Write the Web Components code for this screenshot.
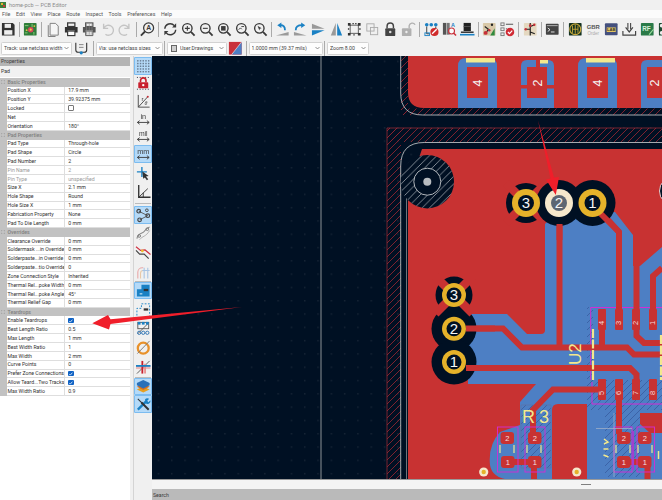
<!DOCTYPE html>
<html>
<head>
<meta charset="utf-8">
<title>home-pcb — PCB Editor</title>
<style>
  html, body { margin: 0; padding: 0; background: #f0f0f0; overflow: hidden; }
  body { font-family: Roboto, "Liberation Sans", sans-serif; }
  #app { display: flex; flex-direction: column; width: 662px; height: 500px; position: relative; overflow: hidden; filter: blur(0.3px); }
  #main { display: flex; height: 444px; }
  #right { display: flex; flex-direction: column; flex: none; width: 510px; }
</style>
</head>
<body>
<div id="app">
  <pcb-titlebar>home-pcb — PCB Editor</pcb-titlebar>
  <pcb-menubar>
    <span>File</span><span>Edit</span><span>View</span><span>Place</span><span>Route</span><span>Inspect</span><span>Tools</span><span>Preferences</span><span>Help</span>
  </pcb-menubar>
  <pcb-toolbar>
    <pcb-icon name="save"></pcb-icon><pcb-sep></pcb-sep>
    <pcb-icon name="board"></pcb-icon><pcb-sep></pcb-sep>
    <pcb-icon name="page"></pcb-icon><pcb-icon name="print"></pcb-icon><pcb-icon name="plot"></pcb-icon><pcb-icon name="undo"></pcb-icon><pcb-icon name="redo"></pcb-icon><pcb-sep></pcb-sep>
    <pcb-icon name="find"></pcb-icon><pcb-sep></pcb-sep>
    <pcb-icon name="refresh"></pcb-icon><pcb-icon name="zoomin"></pcb-icon><pcb-icon name="zoomout"></pcb-icon><pcb-icon name="zoomfit"></pcb-icon><pcb-icon name="zoomback"></pcb-icon><pcb-icon name="zoomsel"></pcb-icon><pcb-sep></pcb-sep>
    <pcb-icon name="rotl"></pcb-icon><pcb-icon name="rotr"></pcb-icon><pcb-icon name="mirrorh"></pcb-icon><pcb-icon name="mirrorv"></pcb-icon>
    <pcb-icon name="group"></pcb-icon><pcb-icon name="ungroup"></pcb-icon><pcb-icon name="lock"></pcb-icon><pcb-icon name="unlock"></pcb-icon><pcb-sep></pcb-sep>
    <pcb-icon name="netcheck"></pcb-icon><pcb-icon name="netinspect"></pcb-icon><pcb-icon name="layerhat"></pcb-icon><pcb-sep></pcb-sep>
    <pcb-icon name="router"></pcb-icon><pcb-icon name="drc"></pcb-icon><pcb-sep></pcb-sep>
    <pcb-icon name="schem"></pcb-icon><pcb-sep></pcb-sep>
    <pcb-icon name="terminal"></pcb-icon><pcb-sep></pcb-sep>
    <pcb-icon name="fpcheck"></pcb-icon><pcb-icon name="gbr"></pcb-icon><pcb-icon name="fab"></pcb-icon><pcb-icon name="import"></pcb-icon><pcb-icon name="rfpcb"></pcb-icon><pcb-icon name="pads"></pcb-icon>
  </pcb-toolbar>
  <pcb-options>
    <pcb-select width="71">Track: use netclass width</pcb-select>
    <pcb-icon name="autotrack" style="width:19px"></pcb-icon><pcb-sep></pcb-sep>
    <pcb-select width="67">Via: use netclass sizes</pcb-select><pcb-sep></pcb-sep>
    <pcb-select width="60" swatch>User.Drawings</pcb-select>
    <pcb-icon name="layerpair" style="width:17px"></pcb-icon><pcb-sep></pcb-sep>
    <pcb-select width="74">1.0000 mm (39.37 mils)</pcb-select><pcb-sep></pcb-sep>
    <pcb-select width="42">Zoom 8.00</pcb-select>
  </pcb-options>
  <div id="main">
    <prop-panel title-text="Properties" kind="Pad">
      <prop-group label="Basic Properties">
        <prop-row name="Position X" value="17.9 mm"></prop-row>
        <prop-row name="Position Y" value="39.92375 mm"></prop-row>
        <prop-row name="Locked" check="off"></prop-row>
        <prop-row name="Net" value=""></prop-row>
        <prop-row name="Orientation" value="180°"></prop-row>
      </prop-group>
      <prop-group label="Pad Properties">
        <prop-row name="Pad Type" value="Through-hole"></prop-row>
        <prop-row name="Pad Shape" value="Circle"></prop-row>
        <prop-row name="Pad Number" value="2"></prop-row>
        <prop-row name="Pin Name" value="2" disabled></prop-row>
        <prop-row name="Pin Type" value="unspecified" disabled></prop-row>
        <prop-row name="Size X" value="2.1 mm"></prop-row>
        <prop-row name="Hole Shape" value="Round"></prop-row>
        <prop-row name="Hole Size X" value="1 mm"></prop-row>
        <prop-row name="Fabrication Property" value="None"></prop-row>
        <prop-row name="Pad To Die Length" value="0 mm"></prop-row>
      </prop-group>
      <prop-group label="Overrides">
        <prop-row name="Clearance Override" value="0 mm"></prop-row>
        <prop-row name="Soldermask ...in Override" value="0 mm"></prop-row>
        <prop-row name="Solderpaste...in Override" value="0 mm"></prop-row>
        <prop-row name="Solderpaste...tio Override" value="0"></prop-row>
        <prop-row name="Zone Connection Style" value="Inherited"></prop-row>
        <prop-row name="Thermal Rel...poke Width" value="0 mm"></prop-row>
        <prop-row name="Thermal Rel...poke Angle" value="45°"></prop-row>
        <prop-row name="Thermal Relief Gap" value="0 mm"></prop-row>
      </prop-group>
      <prop-group label="Teardrops">
        <prop-row name="Enable Teardrops" check="on"></prop-row>
        <prop-row name="Best Length Ratio" value="0.5"></prop-row>
        <prop-row name="Max Length" value="1 mm"></prop-row>
        <prop-row name="Best Width Ratio" value="1"></prop-row>
        <prop-row name="Max Width" value="2 mm"></prop-row>
        <prop-row name="Curve Points" value="0"></prop-row>
        <prop-row name="Prefer Zone Connections" check="on"></prop-row>
        <prop-row name="Allow Teard...Two Tracks" check="on"></prop-row>
        <prop-row name="Max Width Ratio" value="0.9"></prop-row>
      </prop-group>
    </prop-panel>
    <side-toolbar>
      <pcb-icon name="grid" active></pcb-icon>
      <pcb-icon name="gridlock"></pcb-icon>
      <pcb-icon name="polar"></pcb-icon>
      <pcb-icon name="unitin"></pcb-icon>
      <pcb-icon name="unitmil"></pcb-icon>
      <pcb-icon name="unitmm" active></pcb-icon>
      <pcb-icon name="cursor" tall></pcb-icon>
      <pcb-icon name="axes" tall></pcb-icon>
      <pcb-sep horizontal style="margin:1.5px auto"></pcb-sep>
      <pcb-icon name="ratsnest" active></pcb-icon>
      <pcb-icon name="curved" tall></pcb-icon>
      <pcb-icon name="shove" tall></pcb-icon>
      <pcb-icon name="fade" tall></pcb-icon>
      <pcb-sep horizontal style="margin:-.5px auto"></pcb-sep>
      <pcb-icon name="zonefill" active></pcb-icon>
      <pcb-icon name="zoneout" tall></pcb-icon>
      <pcb-icon name="padsketch" tall></pcb-icon>
      <pcb-icon name="viasketch" tall></pcb-icon>
      <pcb-icon name="trackclear" tall></pcb-icon>
      <pcb-sep horizontal style="margin:0 auto"></pcb-sep>
      <pcb-icon name="layers" active></pcb-icon>
      <pcb-icon name="tools" active></pcb-icon>
    </side-toolbar>
    <div id="right">
      <pcb-canvas></pcb-canvas>
      <pcb-search>Search</pcb-search>
    </div>
  </div>
  <pcb-arrows></pcb-arrows>
</div>

<script>
const UI_FONT = 'Roboto, "Liberation Sans", sans-serif';
const D = "#3a3a3a";
const B = "#1a81c4";

function glass(inner) {
  return `<circle cx="7" cy="7" r="5.2" fill="none" stroke="${D}" stroke-width="1.5"/><path d="M11 11l4 4" stroke="${D}" stroke-width="2"/>${inner}`;
}
function unit(txt, size) {
  return `<text x="8" y="8" text-anchor="middle" font-size="${size}" fill="${D}" font-family="Liberation Sans">${txt}</text><path d="M1.5 11.5h13M1.5 11.5l2.5-2M1.5 11.5l2.5 2M14.5 11.5l-2.5-2M14.5 11.5l-2.5 2" stroke="${D}" fill="none"/>`;
}

// icon table, everything drawn on a 16x16 box
const ICONS = {
  save: `<path d="M1 1h12l2 2v12H1z" fill="#333"/><rect x="4" y="2" width="7" height="4.5" fill="#eee"/><rect x="3.5" y="9" width="9" height="5" fill="#eee"/>`,
  board: `<rect x="1" y="1" width="14" height="14" rx="1" fill="#2f7d3a"/><path d="M2 4h4M10 2v4M2 12h3M12 14v-3" stroke="#8fd07a"/><circle cx="8.5" cy="8.5" r="3" fill="#d8445a"/><circle cx="8.5" cy="8.5" r="1.2" fill="#f4d04a"/><circle cx="4" cy="9" r="1" fill="#e8c040"/><circle cx="12.5" cy="4.5" r="1" fill="#e8c040"/>`,
  page: `<path d="M4.5 1.5h6l3 3v10h-9z" fill="#f6f6f6" stroke="#777"/><path d="M2.5 3.5v12.5h8" fill="none" stroke="#777"/>`,
  print: `<rect x="4" y="1" width="8" height="4" fill="none" stroke="${D}" stroke-width="1.4"/><path d="M1 5.5h14v6h-3v-2H4v2H1z" fill="#333"/><rect x="4" y="10" width="8" height="5" fill="#fff" stroke="${D}" stroke-width="1.3"/>`,
  plot: `<rect x="4" y="1" width="8" height="4" fill="none" stroke="#555" stroke-width="1.3"/><path d="M1 5.5h14v6h-3v-2H4v2H1z" fill="#555"/><path d="M4 10h8v5H4z" fill="#ddd" stroke="#555"/><path d="M5 2v12M8 2v12M11 2v12" stroke="#888" stroke-width=".6"/>`,
  undo: `<path d="M4 2v5h5M4.5 6.5a5.5 5.5 0 1 1 1.5 7" fill="none" stroke="#c4c4c4" stroke-width="1.5"/>`,
  redo: `<path d="M12 2v5H7M11.5 6.5a5.5 5.5 0 1 0-1.5 7" fill="none" stroke="#c4c4c4" stroke-width="1.5"/>`,
  find: `<circle cx="9.5" cy="6.5" r="5.5" fill="none" stroke="${D}" stroke-width="1.4"/><path d="M5.5 10.5L1 15" stroke="${D}" stroke-width="2"/><text x="9.5" y="9" text-anchor="middle" font-size="7.5" font-weight="700" fill="${D}" font-family="Liberation Sans">A</text>`,
  refresh: `<path d="M2 7.5a6 6 0 0 1 10.5-3.5M14 8.5A6 6 0 0 1 3.5 12" fill="none" stroke="${D}" stroke-width="1.6"/><path d="M14.5 1.5v4.5h-4.5zM1.5 14.5V10H6z" fill="${D}"/>`,
  zoomin: glass(`<path d="M4.3 7h5.4M7 4.3v5.4" stroke="${D}" stroke-width="1.2"/>`),
  zoomout: glass(`<path d="M4.3 7h5.4" stroke="${D}" stroke-width="1.2"/>`),
  zoomfit: glass(`<rect x="4.5" y="4.5" width="5" height="5" fill="${D}"/>`),
  zoomback: glass(`<path d="M4 8.5l2-2 1.5 1.5M7 5h3" fill="none" stroke="${D}"/>`),
  zoomsel: glass(`<path d="M5 4l4.5 3-2 .5-.5 2z" fill="${D}"/>`),
  rotl: `<path d="M1 15l14-4v4z" fill="#9a9a9a"/><path d="M11 9C11 5.5 9 3.5 6 3.5" fill="none" stroke="${B}" stroke-width="2"/><path d="M7 .5v6L2.5 3.5z" fill="${B}"/>`,
  rotr: `<path d="M15 15L1 11v4z" fill="#9a9a9a"/><path d="M3 9c0-3.5 2-5.5 7-5.5" fill="none" stroke="${B}" stroke-width="2"/><path d="M9 .5v6l4.5-3z" fill="${B}"/>`,
  mirrorh: `<path d="M1 2l14 5.5H1z" fill="#999"/><path d="M1 9h14L1 15z" fill="${B}"/>`,
  mirrorv: `<path d="M2 15L7.5 1v14z" fill="#999"/><path d="M9 1l5.5 14H9z" fill="${B}"/>`,
  group: `<rect x="3.5" y="3.5" width="9" height="9" fill="none" stroke="#555"/><path d="M1 1h3v3H1zM12 1h3v3h-3zM1 12h3v3H1zM12 12h3v3h-3zM6 1h1.5v1.5H6zM9 1h1.5v1.5H9zM1 7h1.5v1.5H1zM13.5 7H15v1.5h-1.5zM7 13.5h1.5V15H7z" fill="#333"/>`,
  ungroup: `<rect x="2" y="2" width="8" height="8" fill="none" stroke="#aaa"/><rect x="6" y="6" width="8" height="8" fill="none" stroke="#aaa"/>`,
  lock: `<path d="M4.5 7V4.5a3.5 3.5 0 0 1 7 0V7" fill="none" stroke="#444" stroke-width="1.6"/><rect x="2.5" y="7" width="11" height="8.5" rx="1" fill="#444"/><circle cx="8" cy="11" r="1.4" fill="#ddd"/>`,
  unlock: `<path d="M9 7V4a3.5 3.5 0 0 1 6.5-1" fill="none" stroke="#b0b0b0" stroke-width="1.5"/><rect x="1" y="7" width="10.5" height="8.5" rx="1" fill="#b0b0b0"/><circle cx="6" cy="11" r="1.3" fill="#eee"/>`,
  netcheck: `<circle cx="3" cy="3" r="2" fill="${B}"/><circle cx="8" cy="3" r="2" fill="${B}"/><circle cx="13" cy="3" r="2" fill="${B}"/><path d="M3 5v8h3M13 5v3" fill="none" stroke="#333"/><rect x="1" y="12" width="5" height="3" fill="none" stroke="${B}"/><circle cx="11.5" cy="11" r="4.5" fill="#d02b2b"/><path d="M9 13l5-5" stroke="#fff" stroke-width="1.5"/>`,
  netinspect: `<rect x="1" y="1" width="3.5" height="13" fill="#555"/><rect x="5" y="1" width="3.5" height="13" fill="#777"/><text x="12" y="6" text-anchor="middle" font-size="6" font-weight="700" fill="${B}" font-family="Liberation Sans">A</text><circle cx="10.5" cy="10" r="3.3" fill="#fff" fill-opacity=".6" stroke="#c8303a" stroke-width="1.2"/><path d="M13 12.5l2.5 2.5" stroke="#c8303a" stroke-width="1.6"/>`,
  layerhat: `<path d="M4 1h8v9H4z" fill="#222"/><path d="M4 5h8" stroke="#555"/><path d="M1 10.5h14v1.5H1z" fill="#222"/><path d="M0 14h16" stroke="${B}" stroke-width="1.8"/>`,
  router: `<rect x="1" y="1" width="14" height="14" rx="1" fill="#d8c8a8"/><path d="M9 15l5-8v8z" fill="#2f8a3e"/><path d="M3 5l4 3-3 5" fill="none" stroke="#222" stroke-width="1.2"/><circle cx="4" cy="12" r="2.2" fill="#c8303a"/><circle cx="8" cy="9" r="1.4" fill="#c8303a"/><circle cx="11" cy="3" r="1.3" fill="#222"/>`,
  drc: `<rect x="1" y="1" width="3.5" height="3" fill="none" stroke="#777"/><rect x="1" y="6.5" width="3.5" height="3" fill="none" stroke="#777"/><rect x="1" y="12" width="3.5" height="3" fill="none" stroke="#777"/><path d="M6.5 2.5h8M6.5 7.5h1" stroke="#555" stroke-width="1.2"/><circle cx="11" cy="11" r="4.7" fill="#d02b35"/><path d="M8.7 11l1.8 1.8 3-3.3" fill="none" stroke="#fff" stroke-width="1.3"/>`,
  schem: `<rect x="1" y="1" width="14" height="14" rx="1" fill="#e4d8c0"/><path d="M8 1v14M2 8h6M8 5l5-2M8 11l5 2" stroke="#222" stroke-width="1.3"/><circle cx="8" cy="4" r="1.5" fill="#c8303a"/><circle cx="12.5" cy="3" r="1.3" fill="#c8303a"/><circle cx="3" cy="8" r="1.3" fill="#c8303a"/>`,
  terminal: `<rect x="1" y="2" width="14" height="12" rx=".8" fill="#444"/><path d="M2 4h12" stroke="#bbb"/><path d="M3 6.5l2.5 2L3 10.5M6.5 11h4" fill="none" stroke="#eee"/>`,
  fpcheck: `<rect x="1" y="1" width="14" height="14" rx="1" fill="#123020"/><ellipse cx="8" cy="8" rx="6" ry="6" fill="none" stroke="#c8a83c" stroke-width="1.3"/><path d="M5 4v8M8 3v10M11 4v8M5 8h6" stroke="#c8a83c"/>`,
  gbr: `<text x="8" y="7.3" text-anchor="middle" font-size="6.5" font-weight="700" fill="#555" font-family="Liberation Sans">GBR</text><text x="8" y="14" text-anchor="middle" font-size="5" fill="#aaa" font-family="Liberation Sans">Order</text>`,
  fab: `<rect x="1" y="1.5" width="14" height="13" rx="1" fill="#44507e"/><rect x="3" y="6" width="10" height="5" fill="#e8c860"/><text x="8" y="10.3" text-anchor="middle" font-size="4.5" font-weight="700" fill="#333" font-family="Liberation Sans">LAB</text>`,
  import: `<path d="M6.5 1v7M9.5 1v7" stroke="#444" stroke-width="1.2"/><path d="M4 6l4 5 4-5" fill="none" stroke="#444" stroke-width="1.3"/><path d="M1 10v4.5h14V10" fill="none" stroke="#444" stroke-width="1.3"/>`,
  rfpcb: `<rect x="1" y="1" width="14" height="14" rx="1" fill="#2a7a48"/><text x="7" y="10" text-anchor="middle" font-size="7" font-weight="700" fill="#d8f0d8" font-family="Liberation Sans">RF</text><path d="M10 14l5-6" stroke="#9fe0a0" stroke-width="1.2"/>`,
  pads: `<rect x="1" y="1" width="14" height="14" rx="1" fill="#1c4a30"/><g fill="#eee"><circle cx="4" cy="4" r="2"/><circle cx="12" cy="4" r="2"/><circle cx="4" cy="12" r="2"/><circle cx="12" cy="12" r="2"/></g><path d="M8 5.5v5M5.5 8h5" stroke="#fff" stroke-width="1.3"/>`,
  autotrack: `<path d="M2 2v8a2.5 2.5 0 0 0 2.5 2.5h7A2.5 2.5 0 0 0 14 10V2" fill="none" stroke="#333" stroke-width="1.2"/><path d="M5.5 4h5M5.5 7h5" stroke="#888" stroke-width="1.1"/><circle cx="8" cy="13" r="1.8" fill="${B}"/>`,
  layerpair: `<rect x="1" y="1" width="14" height="14" fill="#c8303a"/><path d="M15 1v14H4z" fill="#4d7fc4"/><path d="M4 15L15 1" stroke="#eee" stroke-width=".7"/>`,
  grid: `<g fill="#6a7d92">${[2, 5, 8, 11, 14].map(y => [2, 5, 8, 11, 14].map(x => `<rect x="${x - .8}" y="${y - .8}" width="1.6" height="1.6"/>`).join("")).join("")}</g>`,
  gridlock: `<g fill="#556">${[1, 4, 7, 10, 13].map(x => `<rect x="${x}" y="1" width="1.2" height="1.2"/><rect x="${x}" y="14" width="1.2" height="1.2"/>`).join("")}</g><path d="M5 7V5a3 3 0 0 1 6 0v2" fill="none" stroke="#c8202e" stroke-width="1.8"/><rect x="2.5" y="7" width="11" height="6.5" rx=".8" fill="#c8202e"/><circle cx="8" cy="10" r="1.3" fill="#fff"/>`,
  polar: `<path d="M2.5 1v13.5H15M2.5 14.5L13 3" fill="none" stroke="#444"/><text x="6" y="7.5" font-size="6.5" font-family="Liberation Sans" fill="#333">r</text><text x="9.5" y="12.5" font-size="6.5" font-family="Liberation Serif" font-style="italic" fill="#333">θ</text><circle cx="13" cy="3" r="1.1" fill="#c8303a"/>`,
  unitin: unit("in", 8),
  unitmil: unit("mil", 7.5),
  unitmm: unit("mm", 8),
  cursor: `<path d="M1 6.5h11M6.5 1v11" stroke="${B}" stroke-width="1.5"/><path d="M7 6l7 5-3 .7 2.5 3-1.5 1-2.2-3L8 14z" fill="#333"/>`,
  axes: `<path d="M3 0v13.5h13" fill="none" stroke="#333" stroke-width="1.5"/><path d="M3 13.5L13 4M8 8.5v5" fill="none" stroke="#333"/>`,
  ratsnest: `<path d="M3 3.5l10 5L4 13" fill="none" stroke="#555"/><circle cx="3" cy="3.5" r="2" fill="none" stroke="#444" stroke-width="1.3"/><circle cx="13" cy="8.5" r="2" fill="none" stroke="#444" stroke-width="1.3"/><circle cx="4" cy="13" r="2" fill="none" stroke="#444" stroke-width="1.3"/><circle cx="12" cy="2.5" r="1.5" fill="none" stroke="#444"/>`,
  curved: `<path d="M1 14C2 7 7 9 9 6s3-4 6-5" fill="none" stroke="#888" stroke-width="1.2"/><circle cx="3.5" cy="11" r="1.5" fill="none" stroke="#777"/><circle cx="12.5" cy="3.5" r="1.5" fill="none" stroke="#777"/><path d="M4 15C7 11 11 12 15 5" fill="none" stroke="#aaa"/>`,
  shove: `<path d="M0 2l5 4 5-.5 6 5" fill="none" stroke="#d03040" stroke-width="1.3"/><path d="M0 6l4 4 5 0 5 5" fill="none" stroke="#444" stroke-width="1.3"/><circle cx="7" cy="6.5" r="1.5" fill="#f0c030"/>`,
  fade: `<path d="M2 15V8a5 5 0 0 1 5-5h1" fill="none" stroke="#e8a8a8" stroke-width="1.2"/><path d="M5 15V9a3 3 0 0 1 3-3h1" fill="none" stroke="#e8c8a8" stroke-width="1.2"/><path d="M9 15V3M13 15V3M7 6h8" stroke="#a8c4e4" stroke-width="1.2" fill="none"/>`,
  zonefill: `<path d="M1 15V7h5V2h9v13z" fill="${B}"/><rect x="8.5" y="6.5" width="5" height="2.5" fill="#333"/><path d="M4 12h3" stroke="#fff"/>`,
  zoneout: `<path d="M1 15V7h5V2h9v13" fill="none" stroke="${B}" stroke-dasharray="2 1.6"/><rect x="8.5" y="7" width="5" height="2.5" fill="#333"/>`,
  padsketch: `<path d="M2 14L14 2" stroke="#555"/><rect x="2" y="1.5" width="12" height="7" fill="none" stroke="#555"/><g fill="${B}"><rect x="2" y="1" width="3" height="3"/><rect x="6.5" y="1" width="3" height="3"/><rect x="11" y="1" width="3" height="3"/></g><g fill="none" stroke="#2a70b0"><circle cx="3.5" cy="13" r="1.8"/><circle cx="8" cy="13" r="1.8"/><circle cx="12.5" cy="13" r="1.8"/></g>`,
  viasketch: `<circle cx="8" cy="9" r="6" fill="none" stroke="#e8912a" stroke-width="2.5"/><circle cx="8" cy="9" r="2.7" fill="#f0f0f0"/><path d="M1.5 15L15 1" stroke="#777"/>`,
  trackclear: `<path d="M1 15L15 1" stroke="#555"/><path d="M0 8h16" stroke="#e8a0a0" stroke-width="4" opacity=".7"/><path d="M7 1v14" stroke="#c8202e" stroke-width="2"/><path d="M10 4v11" stroke="#e89090" stroke-width="2"/><path d="M0 6.5h16" stroke="${B}" stroke-width="2"/>`,
  layers: `<path d="M8 8l7 3.5L8 15l-7-3.5z" fill="#e8a020"/><path d="M8 5l7 3.5L8 12 1 8.5z" fill="#d87020"/><path d="M8 1l7 3.5V7L8 10.5 1 7V4.5z" fill="#2a70b8"/>`,
  tools: `<path d="M2 14L12 4" stroke="${B}" stroke-width="2.6"/><path d="M10 2.5a3.5 3.5 0 0 1 4.5-.5l-2.3 2.3 1.5 1.5L16 3.5a3.5 3.5 0 0 1-5.5 3.5z" fill="${B}"/><path d="M14 14L6 6" stroke="#333" stroke-width="2.2"/><path d="M7 7L2 2" stroke="#333" stroke-width="1.2"/>`
};

class PcbTitlebar extends HTMLElement {
  constructor() {
    super();
    this.attachShadow({ mode: "open" }).innerHTML = `
      <style>
        :host { display: flex; align-items: center; gap: 3px; height: 10px; background: #f0f0f0; color: #8c8c8c; font: 5.5px ${UI_FONT}; }
      </style>
      <svg width="6" height="6" viewBox="0 0 6 6"><rect width="6" height="6" fill="#3c7d3c"/><rect x="1" y="1" width="2" height="2" fill="#e4b030"/><rect x="3" y="3" width="2" height="2" fill="#c8303a"/></svg>
      <slot></slot>`;
  }
}
customElements.define("pcb-titlebar", PcbTitlebar);

class PcbMenubar extends HTMLElement {
  constructor() {
    super();
    this.attachShadow({ mode: "open" }).innerHTML = `
      <style>
        :host { display: flex; align-items: center; gap: 5.6px; height: 8px; padding-left: 2px; background: #fbfbfb; color: #555; font: 5.3px ${UI_FONT}; }
      </style>
      <slot></slot>`;
  }
}
customElements.define("pcb-menubar", PcbMenubar);

class PcbToolbar extends HTMLElement {
  constructor() {
    super();
    this.attachShadow({ mode: "open" }).innerHTML = `
      <style>
        :host { display: flex; align-items: center; height: 22px; margin-left: -1px; background: #f0f0f0; }
      </style>
      <slot></slot>`;
  }
}
customElements.define("pcb-toolbar", PcbToolbar);

class PcbOptions extends HTMLElement {
  constructor() {
    super();
    this.attachShadow({ mode: "open" }).innerHTML = `
      <style>
        :host { display: flex; align-items: center; height: 16px; padding-left: 1px; background: #f0f0f0; color: #444; font: 5.2px ${UI_FONT}; }
      </style>
      <slot></slot>`;
  }
}
customElements.define("pcb-options", PcbOptions);

class PcbIcon extends HTMLElement {
  connectedCallback() {
    if (this.shadowRoot) return;
    const body = ICONS[this.getAttribute("name")] || "";
    this.attachShadow({ mode: "open" }).innerHTML = `
      <style>
        :host { display: flex; align-items: center; justify-content: center; flex: none; width: 18px; height: 17.7px; box-sizing: border-box; border-radius: 1px; }
        :host([tall]) { height: 19.3px; }
        :host([active]) { background: #b5daf8; outline: 1px solid #7cbcf0; outline-offset: -1px; }
        svg { width: 14.5px; height: 14.5px; display: block; overflow: visible; }
      </style>
      <svg viewBox="0 0 16 16">${body}</svg>`;
  }
}
customElements.define("pcb-icon", PcbIcon);

class PcbSep extends HTMLElement {
  constructor() {
    super();
    this.attachShadow({ mode: "open" }).innerHTML = `
      <style>
        :host { display: block; flex: none; width: 4.5px; height: 15px; background: linear-gradient(#aaa, #aaa) center / 1px 100% no-repeat; }
        :host([horizontal]) { width: 16px; height: 1.2px; background: #bbb; }
      </style>`;
  }
}
customElements.define("pcb-sep", PcbSep);

class PcbSelect extends HTMLElement {
  connectedCallback() {
    if (this.shadowRoot) return;
    const w = this.getAttribute("width");
    const swatch = this.hasAttribute("swatch") ? `<i></i>` : "";
    this.attachShadow({ mode: "open" }).innerHTML = `
      <style>
        :host { display: flex; align-items: center; flex: none; box-sizing: border-box; width: ${w}px; height: 13px; padding: 0 2px; background: #fdfdfd; border: 1px solid #d2d2d2; border-radius: 1.5px; white-space: nowrap; overflow: hidden; }
        i { flex: none; width: 6px; height: 7px; margin: 0 3px 0 1px; background: #cfcfcf; border: .7px solid #666; box-sizing: border-box; }
        span { flex: 1; overflow: hidden; }
        svg { flex: none; width: 5px; height: 4px; }
      </style>
      ${swatch}<span><slot></slot></span>
      <svg viewBox="0 0 5 4"><path d="M.5 1l2 2 2-2" fill="none" stroke="#666" stroke-width=".7"/></svg>`;
  }
}
customElements.define("pcb-select", PcbSelect);

class PropPanel extends HTMLElement {
  connectedCallback() {
    if (this.shadowRoot) return;
    this.attachShadow({ mode: "open" }).innerHTML = `
      <style>
        :host { display: block; flex: none; width: 130px; padding-top: 1px; margin-right: 2.7px; background: #fff; color: #333; font: 5.2px ${UI_FONT}; }
        .head { height: 8.5px; line-height: 8.5px; padding-left: 1px; background: #b4b4b4; color: #3c3c3c; }
        .kind { height: 11px; line-height: 11px; padding-left: 1px; background: #f1f1f1; margin-bottom: 1.2px; }
      </style>
      <div class="head">${this.getAttribute("title-text")}</div>
      <div class="kind">${this.getAttribute("kind")}</div>
      <slot></slot>`;
  }
}
customElements.define("prop-panel", PropPanel);

class PropGroup extends HTMLElement {
  connectedCallback() {
    if (this.shadowRoot) return;
    this.attachShadow({ mode: "open" }).innerHTML = `
      <style>
        :host { display: block; }
        .label { display: flex; align-items: center; height: 8.85px; padding-left: 7.5px; background: #c2c2c2; color: #7e7e7e; font-weight: 500; position: relative; }
        .label svg { position: absolute; left: 1px; top: 2.2px; width: 4px; height: 4px; }
      </style>
      <div class="label"><svg viewBox="0 0 8 8"><rect x=".5" y=".5" width="7" height="7" fill="#e8e8e8" stroke="#999"/><path d="M2 4h4" stroke="#555"/></svg>${this.getAttribute("label")}</div>
      <slot></slot>`;
  }
}
customElements.define("prop-group", PropGroup);

class PropRow extends HTMLElement {
  connectedCallback() {
    if (this.shadowRoot) return;
    const check = this.getAttribute("check");
    let val = this.getAttribute("value") || "";
    if (check === "on") val = `<b class="on"><svg viewBox="0 0 6 6"><path d="M1.3 3.2l1.2 1.2 2.2-2.6" fill="none" stroke="#fff" stroke-width=".8"/></svg></b>`;
    if (check === "off") val = `<b class="off"></b>`;
    this.attachShadow({ mode: "open" }).innerHTML = `
      <style>
        :host { display: grid; grid-template-columns: 6.5px 58.7px 1fr; height: 8.85px; line-height: 8.5px; white-space: nowrap; }
        .gut { background: #c2c2c2; }
        .name, .val { box-sizing: border-box; border-bottom: .6px solid #dedede; overflow: hidden; padding-left: 1px; display: flex; align-items: center; }
        .name { border-right: .6px solid #dedede; letter-spacing: -.03px; }
        .val { padding-left: 3px; }
        :host([disabled]) { color: #9a9a9a; }
        b { display: block; width: 5.6px; height: 5.6px; box-sizing: border-box; border-radius: 1px; }
        .off { border: .7px solid #777; background: #fff; }
        .on { background: #0f62c4; }
        svg { display: block; width: 100%; height: 100%; }
      </style>
      <span class="gut"></span><span class="name">${this.getAttribute("name")}</span><span class="val">${val}</span>`;
  }
}
customElements.define("prop-row", PropRow);

class SideToolbar extends HTMLElement {
  constructor() {
    super();
    this.attachShadow({ mode: "open" }).innerHTML = `
      <style>
        :host { display: flex; flex-direction: column; align-items: center; flex: none; box-sizing: border-box; width: 19.3px; padding-top: 1px; background: #f0f0f0; border-left: 1px solid #d4d4d4; }
      </style>
      <slot></slot>`;
  }
}
customElements.define("side-toolbar", SideToolbar);

const HATCH = (x, y, w, h, id) => `<rect x="${x}" y="${y}" width="${w}" height="${h}" fill="url(#${id})"/>`;
const smallPad = (x, y, n) => `<rect x="${x}" y="${y}" width="13.5" height="12" rx="3" fill="#c83232"/><text x="${x + 6.75}" y="${y + 8.5}" class="n">${n}</text>`;
const sop = (x, n, top) => `<rect x="${x}" y="${top ? 309 : 379}" width="8" height="21" rx="1" fill="#c83232"/><text transform="translate(${x + 6.3} ${top ? 323 : 393}) rotate(-90)" class="m">${n}</text>`;
const bigPad = (x, y, n, r, hole, sel) => `<circle cx="${x}" cy="${y}" r="${r}" fill="${sel ? "#f6e8cc" : "#e5b22a"}"/><circle cx="${x}" cy="${y}" r="${hole}" fill="${sel ? "#5d6672" : "#001023"}"/><text x="${x}" y="${y + 5.2}" class="p">${n}</text>`;
const thermal = (x, y, r) => `<circle cx="${x}" cy="${y}" r="${r}" fill="#001023"/><path d="M${x - r} ${y - r}L${x + r} ${y + r}M${x + r} ${y - r}L${x - r} ${y + r}" stroke="#c83232" stroke-width="8.5"/>`;
const topPad4 = (x) => `<path d="M${x} 108V66q0-8 8-8h23q8 0 8 8v42z" fill="#4d7fc4"/><rect x="${x + 8}" y="58" width="29" height="4.5" fill="#f2e88e"/><rect x="${x + 9}" y="67" width="21" height="31" fill="#c83232"/><text transform="translate(${x + 24} 83) rotate(-90)" class="t">4</text>`;
const topPad2 = (x) => `<path d="M${x} 108V66q0-6 6-6h21q6 0 6 6v42z" fill="#4d7fc4"/><rect x="${x + 19}" y="60" width="8" height="3.5" fill="#f2e88e"/><rect x="${x + 6}" y="67" width="20" height="31" fill="#c83232"/><rect x="${x + 15}" y="60" width="4" height="8" fill="#c83232"/><rect x="${x}" y="85" width="7" height="3.5" fill="#c83232"/><rect x="${x + 25}" y="85" width="8" height="3.5" fill="#c83232"/><text transform="translate(${x + 20.5} 83) rotate(-90)" class="t">2</text>`;

class PcbCanvas extends HTMLElement {
  constructor() {
    super();
    this.attachShadow({ mode: "open" }).innerHTML = `
      <style>
        :host { display: block; flex: none; width: 510px; height: 433px; background: #f4f4f4; position: relative; }
        svg { display: block; width: 510px; height: 424px; }
        .t { font: 12.5px "Liberation Sans", sans-serif; fill: #f4f4f4; text-anchor: middle; }
        .p { font: 15px "Liberation Sans", sans-serif; fill: #f6f6f6; text-anchor: middle; }
        .n { font: 7.5px "Liberation Sans", sans-serif; fill: #f4e0e0; text-anchor: middle; }
        .m { font: 7.5px "Liberation Sans", sans-serif; fill: #f4d8d8; text-anchor: middle; }
        .handle { position: absolute; left: 429px; top: 428px; width: 10px; height: 1px; background: #808080; }
      </style>
      <svg viewBox="152 56 510 424">
        <defs>
          <pattern id="dots" width="13.3" height="13.3" patternUnits="userSpaceOnUse" x="152" y="15">
            <rect x="6" y="6" width="1" height="1" fill="#303b49"/>
          </pattern>
          <pattern id="hatch" width="7" height="7" patternUnits="userSpaceOnUse">
            <path d="M-1 8L8 -1" stroke="#8c2430" stroke-width=".9"/>
          </pattern>
          <pattern id="hatchw" width="7.5" height="7.5" patternUnits="userSpaceOnUse">
            <path d="M-1 8.5L8.5 -1" stroke="#b4bac0" stroke-width=".7"/>
          </pattern>
          <pattern id="hatchb" width="7" height="7" patternUnits="userSpaceOnUse">
            <path d="M-1 8L8 -1" stroke="#3a60a4" stroke-width=".9"/>
          </pattern>
        </defs>
        <rect x="152" y="56" width="510" height="424" fill="#001023"/>
        <rect x="152" y="56" width="510" height="424" fill="url(#dots)"/>
        <path d="M321 56V480" stroke="#8c9298" stroke-width="1"/>

        <!-- upper board -->
        ${HATCH(401, 56, 7, 59, "hatch")}${HATCH(401, 108.5, 261, 6.5, "hatch")}
        <path d="M408 56H662V108H424q-16 0-16-16z" fill="#c83232"/>
        <path d="M400.7 56V93q0 22 22 22H662" fill="none" stroke="#b8bcc0" stroke-width=".9"/>
        ${topPad4(458)}${topPad2(521)}${topPad4(578)}
        <path d="M662 108H641V66q0-6 6-6h15z" fill="#4d7fc4"/>
        <rect x="647" y="67" width="15" height="31" fill="#c83232"/>
        <text transform="translate(658.5 83) rotate(-90)" class="t">2</text>

        <!-- lower board -->
        ${HATCH(387, 128, 275, 14, "hatch")}${HATCH(387, 128, 14, 352, "hatch")}
        <path d="M387 480V128H662" fill="none" stroke="#a82c38" stroke-width=".7"/>
        <path d="M422 149H662V480H408V190z" fill="#c83232"/>
        <path d="M400.7 480V166q0-23.5 23.5-23.5H662" fill="none" stroke="#b8bcc0" stroke-width=".9"/>
        <path d="M406.5 480V190" stroke="#9ca0a4" stroke-width=".7"/>

        <!-- bottom layer copper -->
        <path d="M545 215V330q0 4-4 4H527L507 314H468V384H536L520 402V425L500 432Q488 445 490 465Q492 478 510 480H552V410Q552 404 558 404H587V480H662V247L640 266H633V235L615 212H545Z" fill="#4d7fc4"/>

        <!-- mounting hole -->
        <circle cx="427.3" cy="181.7" r="26.7" fill="#001023"/>
        <circle cx="427.3" cy="181.7" r="26.7" fill="url(#hatchw)"/>
        <circle cx="427.3" cy="181.7" r="13.5" fill="#001023" stroke="#c4c8cc" stroke-width=".9"/>
        <circle cx="427.3" cy="181.7" r="4" fill="#b8bcc0"/>

        <circle cx="674" cy="191" r="14.5" fill="#001023" stroke="#e8d0d0" stroke-width="1"/>

        <!-- hatch and outlines of the smd parts -->
        ${HATCH(587, 307, 6, 100, "hatchb")}${HATCH(588, 380, 74, 30, "hatchb")}
        ${HATCH(521, 405, 30, 63, "hatchb")}${HATCH(605, 403, 35, 74, "hatchb")}
        <path d="M590.7 380V307.5H662" fill="none" stroke="#d42cd4" stroke-width="1"/>
        <path d="M592 382V404H662" fill="none" stroke="#d42cd4" stroke-width="1"/>
        <path d="M521 405V468H551V405Z" fill="none" stroke="#5c74a8" stroke-width=".7"/>

        <!-- top layer traces -->
        <g fill="none" stroke="#c83232" stroke-width="6">
          <path d="M559.5 203V348"/>
          <path d="M592.5 203L619 232V330"/>
          <path d="M636.5 230V336L644 343H662"/>
          <path d="M662 268L653 276V330"/>
          <path d="M454 328.5H503L522 347.5H627L634 354.5H662"/>
          <path d="M602 309V347"/>
          <path d="M456 368H630L636.5 374.5V400"/>
          <path d="M602 389.5H553L533 410V435"/>
          <path d="M619 385V434"/>
          <path d="M534 462V480"/>
          <path d="M647.5 462V480"/>
          <path d="M507 462H534"/>
          <path d="M623 462H645"/>
        </g>
        <path d="M640 413H662V433H650L640 424Z" fill="#c83232"/>
        ${sop(598, "4", true)}${sop(615, "3", true)}${sop(632, "2", true)}${sop(649, "1", true)}
        ${sop(598, "5", false)}${sop(615, "6", false)}${sop(632, "7", false)}${sop(649, "8", false)}
        <path d="M593 329V380" stroke="#f2e88e" stroke-width="2.2" stroke-dasharray="9 1.5"/>
        <path d="M661 335V380" stroke="#f2e88e" stroke-width="2.2" stroke-dasharray="9 1.5"/>
        <text transform="translate(581 365) rotate(-90)" font-family="Liberation Sans" font-size="17" fill="#f2e88e">U2</text>

        <!-- pads on the connectors -->
        <circle cx="454" cy="328.7" r="22.5" fill="#001023"/>
        <circle cx="454" cy="362" r="22.5" fill="#001023"/>
        ${thermal(454, 295, 18.5)}
        ${thermal(526, 203, 20)}
        <circle cx="559" cy="203" r="23" fill="#001023"/>
        <circle cx="592.5" cy="203" r="23" fill="#001023"/>
        <path d="M559.5 224V240" stroke="#c83232" stroke-width="6"/>
        <path d="M600 213L619 232" stroke="#c83232" stroke-width="6"/>
        <path d="M466 328.5H495" stroke="#c83232" stroke-width="6"/>
        <path d="M466 368H480" stroke="#c83232" stroke-width="6"/>
        ${bigPad(526, 203, "3", 14, 8)}
        ${bigPad(559, 203, "2", 14, 8, true)}
        ${bigPad(592.5, 203, "1", 14, 8)}
        ${bigPad(454, 295, "3", 12, 7.5)}
        ${bigPad(454, 328.7, "2", 12, 7.5)}
        ${bigPad(454, 362, "1", 12, 7.5)}

        <!-- R3 and the resistor next to it -->
        <g fill="none" stroke="#d42cd4" stroke-width=".9">
          <rect x="497.5" y="427" width="20.5" height="45"/><rect x="525" y="427" width="20" height="45"/>
          <rect x="614" y="427" width="18" height="45"/><rect x="637" y="427" width="17.5" height="45"/>
        </g>
        <path d="M633 431V470" stroke="#a040d0" stroke-width="2.2"/>
        ${smallPad(500.5, 432, 2)}${smallPad(528, 432, 2)}${smallPad(501, 456, 1)}${smallPad(528, 456, 1)}
        ${smallPad(617, 432, 2)}${smallPad(638, 432, 2)}${smallPad(617, 456, 1)}${smallPad(638, 456, 1)}
        <path d="M500 445V453M514 445V453M527 445V453M541 445V453M616 445V453M630 445V453M638 445V453M652 445V453" stroke="#f2e88e" stroke-width="1.2"/>
        <text x="522" y="423" font-family="Liberation Sans" font-size="18" fill="#f2e88e" textLength="27">R3</text>
        <path d="M604 439l4 3-4 2M603.5 449h5M603.5 455l5 2M658.5 451v8" fill="none" stroke="#f2e88e" stroke-width="1.5"/>
        <path d="M596 428.5H632M614 413V477" stroke="#a8b4c8" stroke-width=".7"/>
        <circle cx="483.7" cy="472" r="4.6" fill="#f6e8cc"/><circle cx="483.7" cy="472" r="2.2" fill="#e5b22a"/>
        <circle cx="576.7" cy="472" r="4.6" fill="#f6e8cc"/><circle cx="576.7" cy="472" r="2.2" fill="#e5b22a"/>
        <path d="M152 479.5H662" stroke="#9a9a9a" stroke-width="1"/>
      </svg>
      <span class="handle"></span>`;
  }
}
customElements.define("pcb-canvas", PcbCanvas);

class PcbSearch extends HTMLElement {
  constructor() {
    super();
    this.attachShadow({ mode: "open" }).innerHTML = `
      <style>
        :host { display: flex; align-items: center; height: 11px; padding-left: 1px; background: #bababa; color: #3a3a3a; font: 5.2px ${UI_FONT}; }
      </style>
      <slot></slot>`;
  }
}
customElements.define("pcb-search", PcbSearch);

// the two red annotation arrows lie over the panel and the board
class PcbArrows extends HTMLElement {
  constructor() {
    super();
    this.attachShadow({ mode: "open" }).innerHTML = `
      <style>
        :host { position: absolute; left: 0; top: 0; width: 662px; height: 500px; pointer-events: none; }
      </style>
      <svg width="662" height="500" viewBox="0 0 662 500">
        <path d="M538 120.5L554 177.5L559 177L555.8 195L546 179.5L550.5 178.5Z" fill="#f01e2a"/>
        <path d="M242 307L110.5 319.3L108 315L92.3 323.3L109 329.5L110.5 324Z" fill="#f01e2a"/>
      </svg>`;
  }
}
customElements.define("pcb-arrows", PcbArrows);
</script>
</body>
</html>
